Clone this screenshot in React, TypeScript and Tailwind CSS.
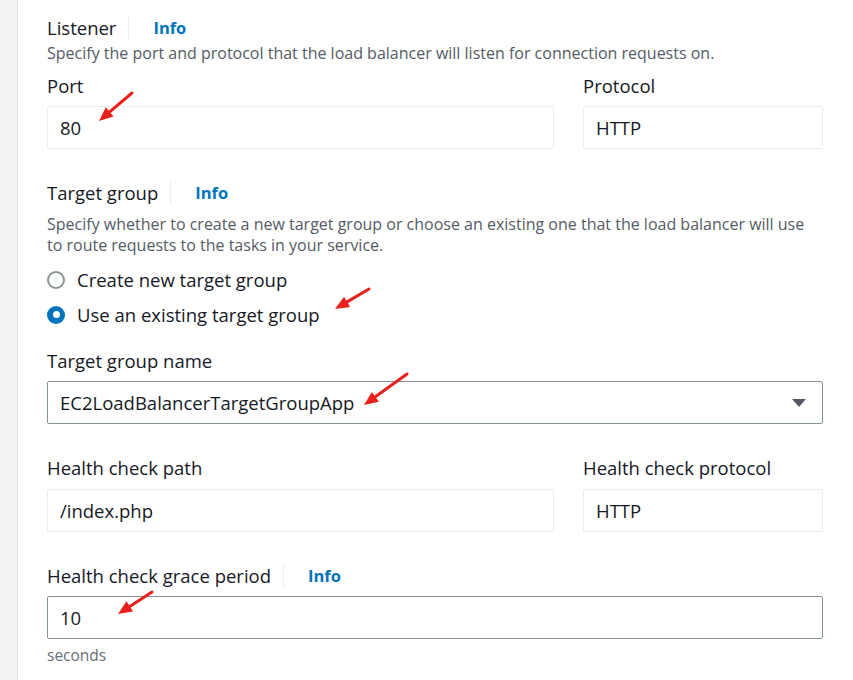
import React from "react";

const font = { fontFamily: '"Open Sans", "Noto Sans", Arial, sans-serif' };

function Arrow({ x1, y1, x2, y2 }: { x1: number; y1: number; x2: number; y2: number }) {
  const dx = x2 - x1;
  const dy = y2 - y1;
  const len = Math.sqrt(dx * dx + dy * dy);
  const ux = dx / len;
  const uy = dy / len;
  const hl = 14;
  const hw = 6;
  const bx = x2 - ux * hl;
  const by = y2 - uy * hl;
  const px = -uy;
  const py = ux;
  return (
    <g>
      <line x1={x1} y1={y1} x2={bx} y2={by} stroke="#e8201b" strokeWidth={3} strokeLinecap="round" />
      <polygon
        points={`${x2},${y2} ${bx + px * hw},${by + py * hw} ${bx - px * hw},${by - py * hw}`}
        fill="#e8201b"
      />
    </g>
  );
}

function Header({ title }: { title: string }) {
  return (
    <div className="flex items-center h-[24px]">
      <span className="text-[18.5px] leading-[24px] text-[#16191f]">{title}</span>
      <span className="ml-[12px] mr-[24px] w-px h-[24px] bg-[#eaeded]" />
      <span className="text-[16.5px] font-bold text-[#0073bb]">Info</span>
    </div>
  );
}

function Label({ children }: { children: React.ReactNode }) {
  return <div className="text-[18.5px] leading-[24px] text-[#16191f]">{children}</div>;
}

function LightInput({ value }: { value: string }) {
  return (
    <div className="h-[43px] border border-[#eaeded] rounded-[2px] flex items-center px-[12px] text-[18.5px] text-[#16191f]">
      {value}
    </div>
  );
}

export default function App() {
  return (
    <div className="relative flex w-[853px] h-[680px] bg-white overflow-hidden" style={font}>
      <div className="w-[18px] bg-[#f2f3f3] border-r border-[#e1e4e6]" />
      <div className="flex-1 pl-[29px] pr-[30px] pt-[16px]">
        <Header title="Listener" />
        <div className="text-[16px] leading-[21px] text-[#545b64] mt-[3px]">
          Specify the port and protocol that the load balancer will listen for connection requests on.
        </div>
        <div className="flex gap-[29px] mt-[10px]">
          <div className="w-[507px] flex flex-col gap-[8px]">
            <Label>Port</Label>
            <LightInput value="80" />
          </div>
          <div className="flex-1 flex flex-col gap-[8px]">
            <Label>Protocol</Label>
            <LightInput value="HTTP" />
          </div>
        </div>

        <div className="mt-[32px]">
          <Header title="Target group" />
        </div>
        <div className="text-[16px] leading-[21px] text-[#545b64] mt-[9px] w-[770px]">
          Specify whether to create a new target group or choose an existing one that the load balancer will use to route requests to the tasks in your service.
        </div>
        <div className="mt-[6px] flex flex-col">
          <div className="flex items-center h-[35px]">
            <span className="w-[18px] h-[18px] rounded-full border-2 border-[#879596] bg-white" />
            <span className="ml-[12px] text-[18.5px] text-[#16191f]">Create new target group</span>
          </div>
          <div className="flex items-center h-[35px]">
            <span className="w-[18px] h-[18px] rounded-full bg-[#0073bb] flex items-center justify-center">
              <span className="w-[7px] h-[7px] rounded-full bg-white" />
            </span>
            <span className="ml-[12px] text-[18.5px] text-[#16191f]">Use an existing target group</span>
          </div>
        </div>

        <div className="mt-[17px] flex flex-col gap-[8px]">
          <Label>Target group name</Label>
          <div className="h-[43px] border border-[#879596] rounded-[2px] flex items-center justify-between pl-[12px] pr-[16px] text-[18.5px] text-[#16191f]">
            <span>EC2LoadBalancerTargetGroupApp</span>
            <svg width="14" height="10" viewBox="0 0 14 10">
              <polygon points="0,1 14,1 7,9" fill="#545b64" />
            </svg>
          </div>
        </div>

        <div className="flex gap-[29px] mt-[32px]">
          <div className="w-[507px] flex flex-col gap-[9px]">
            <Label>Health check path</Label>
            <LightInput value="/index.php" />
          </div>
          <div className="flex-1 flex flex-col gap-[9px]">
            <Label>Health check protocol</Label>
            <LightInput value="HTTP" />
          </div>
        </div>

        <div className="mt-[32px]">
          <Header title="Health check grace period" />
        </div>
        <div className="mt-[8px] h-[43px] border border-[#879596] rounded-[2px] flex items-center px-[12px] text-[18.5px] text-[#16191f]">
          10
        </div>
        <div className="mt-[6px] text-[15.5px] leading-[20px] text-[#687078]">seconds</div>
      </div>

      <svg className="absolute left-0 top-0 pointer-events-none" width="853" height="680">
        <Arrow x1={132} y1={93} x2={99} y2={121} />
        <Arrow x1={369} y1={289} x2={335} y2={309} />
        <Arrow x1={407} y1={374} x2={364} y2={405} />
        <Arrow x1={152} y1={592} x2={118} y2={614} />
      </svg>
    </div>
  );
}
